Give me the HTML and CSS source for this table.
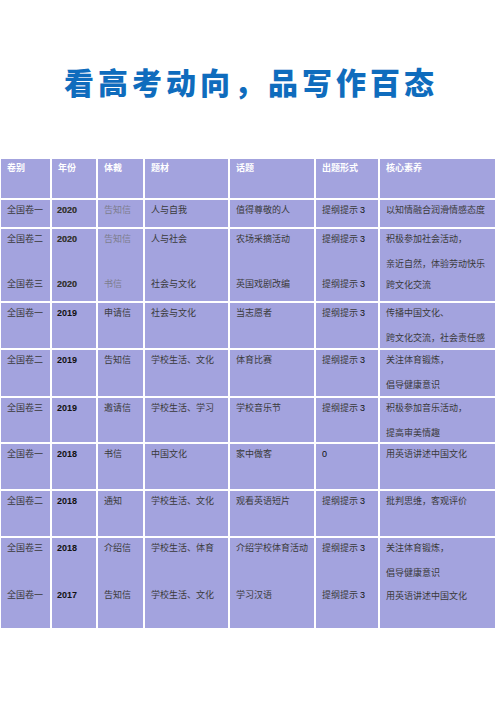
FILE: index.html
```html
<!DOCTYPE html>
<html lang="zh">
<head>
<meta charset="utf-8">
<link rel="stylesheet" href="styles.css">
</head>
<body>
<h1 class="title">看高考动向，品写作百态</h1>
<div class="tbl">
  <div class="c h">卷别</div><div class="c h">年份</div><div class="c h">体裁</div><div class="c h">题材</div><div class="c h">话题</div><div class="c h">出题形式</div><div class="c h">核心素养</div>

  <div class="c">全国卷一</div><div class="c num n20">2020</div><div class="c lt">告知信</div><div class="c">人与自我</div><div class="c">值得尊敬的人</div><div class="c">提纲提示 <span class="d">3</span></div><div class="c">以知情融合润滑情感态度</div>

  <div class="c"><div class="ln">全国卷二</div><div class="ln far">全国卷三</div></div>
  <div class="c num n20"><div class="ln">2020</div><div class="ln far">2020</div></div>
  <div class="c lt"><div class="ln">告知信</div><div class="ln far">书信</div></div>
  <div class="c"><div class="ln">人与社会</div><div class="ln far">社会与文化</div></div>
  <div class="c"><div class="ln">农场采摘活动</div><div class="ln far">英国戏剧改编</div></div>
  <div class="c"><div class="ln">提纲提示 <span class="d">3</span></div><div class="ln far">提纲提示 <span class="d">3</span></div></div>
  <div class="c"><div class="ln">积极参加社会活动，</div><div class="ln nx">亲近自然，体验劳动快乐</div><div class="ln nx2">跨文化交流</div></div>

  <div class="c">全国卷一</div><div class="c num">2019</div><div class="c">申请信</div><div class="c">社会与文化</div><div class="c">当志愿者</div><div class="c">提纲提示 <span class="d">3</span></div><div class="c"><div class="ln">传播中国文化、</div><div class="ln nx">跨文化交流，社会责任感</div></div>

  <div class="c">全国卷二</div><div class="c num">2019</div><div class="c">告知信</div><div class="c">学校生活、文化</div><div class="c">体育比赛</div><div class="c">提纲提示 <span class="d">3</span></div><div class="c"><div class="ln">关注体育锻炼，</div><div class="ln nx">倡导健康意识</div></div>

  <div class="c">全国卷三</div><div class="c num">2019</div><div class="c">邀请信</div><div class="c">学校生活、学习</div><div class="c">学校音乐节</div><div class="c">提纲提示 <span class="d">3</span></div><div class="c"><div class="ln">积极参加音乐活动，</div><div class="ln nx">提高审美情趣</div></div>

  <div class="c">全国卷一</div><div class="c num">2018</div><div class="c">书信</div><div class="c">中国文化</div><div class="c">家中做客</div><div class="c"><span class="d">0</span></div><div class="c">用英语讲述中国文化</div>

  <div class="c">全国卷二</div><div class="c num">2018</div><div class="c">通知</div><div class="c">学校生活、文化</div><div class="c">观看英语短片</div><div class="c">提纲提示 <span class="d">3</span></div><div class="c">批判思维，客观评价</div>

  <div class="c"><div class="ln">全国卷三</div><div class="ln far2">全国卷一</div></div>
  <div class="c num"><div class="ln">2018</div><div class="ln far2">2017</div></div>
  <div class="c"><div class="ln">介绍信</div><div class="ln far2">告知信</div></div>
  <div class="c"><div class="ln">学校生活、体育</div><div class="ln far2">学校生活、文化</div></div>
  <div class="c"><div class="ln">介绍学校体育活动</div><div class="ln far2">学习汉语</div></div>
  <div class="c"><div class="ln">提纲提示 <span class="d">3</span></div><div class="ln far2">提纲提示 <span class="d">3</span></div></div>
  <div class="c"><div class="ln">关注体育锻炼，</div><div class="ln nx">倡导健康意识</div><div class="ln nx3">用英语讲述中国文化</div></div>
</div>
</body>
</html>
```

FILE: styles.css
```css
html, body {
  margin: 0;
  padding: 0;
  background: #ffffff;
}
body {
  width: 496px;
  font-family: "Noto Sans CJK SC", sans-serif;
}
.title {
  margin: 0;
  padding-top: 63px;
  height: 96px;
  box-sizing: border-box;
  text-align: center;
  font-size: 30px;
  line-height: 36px;
  font-weight: 900;
  letter-spacing: 4px;
  color: #0f6cbd;
  padding-left: 6px;
}
.tbl {
  display: grid;
  grid-template-columns: 49px 44px 45px 83px 84px 62px 115px;
  grid-template-rows: 39px 27px 72px 45px 46px 44px 45px 45px 90px;
  gap: 2px;
  margin-left: 1px;
  margin-top: 63px;
  width: 494px;
}
.c {
  background: #a3a3de;
  padding: 3px 0 0 6px;
  font-size: 9px;
  line-height: 14px;
  color: #3a3a3a;
  white-space: nowrap;
}
.h {
  color: #ffffff;
  font-weight: 700;
  padding-top: 2px;
}
.num {
  font-family: "Liberation Sans", Arial, sans-serif;
  font-weight: 700;
  color: #111111;
  padding-left: 5px;
}
.n20 {
  color: #333333;
  text-shadow: 0 0 0.6px #666;
}
.lt {
  color: #7d7d8e;
}
.d {
  font-family: "Liberation Sans", Arial, sans-serif;
  color: #111111;
}
.ln + .nx { margin-top: 11px; }
.ln.nx2 { margin-top: 7px; }
.ln.nx3 { margin-top: 9px; }
.ln.far { margin-top: 31px; }
.ln.far2 { margin-top: 33px; }
```
